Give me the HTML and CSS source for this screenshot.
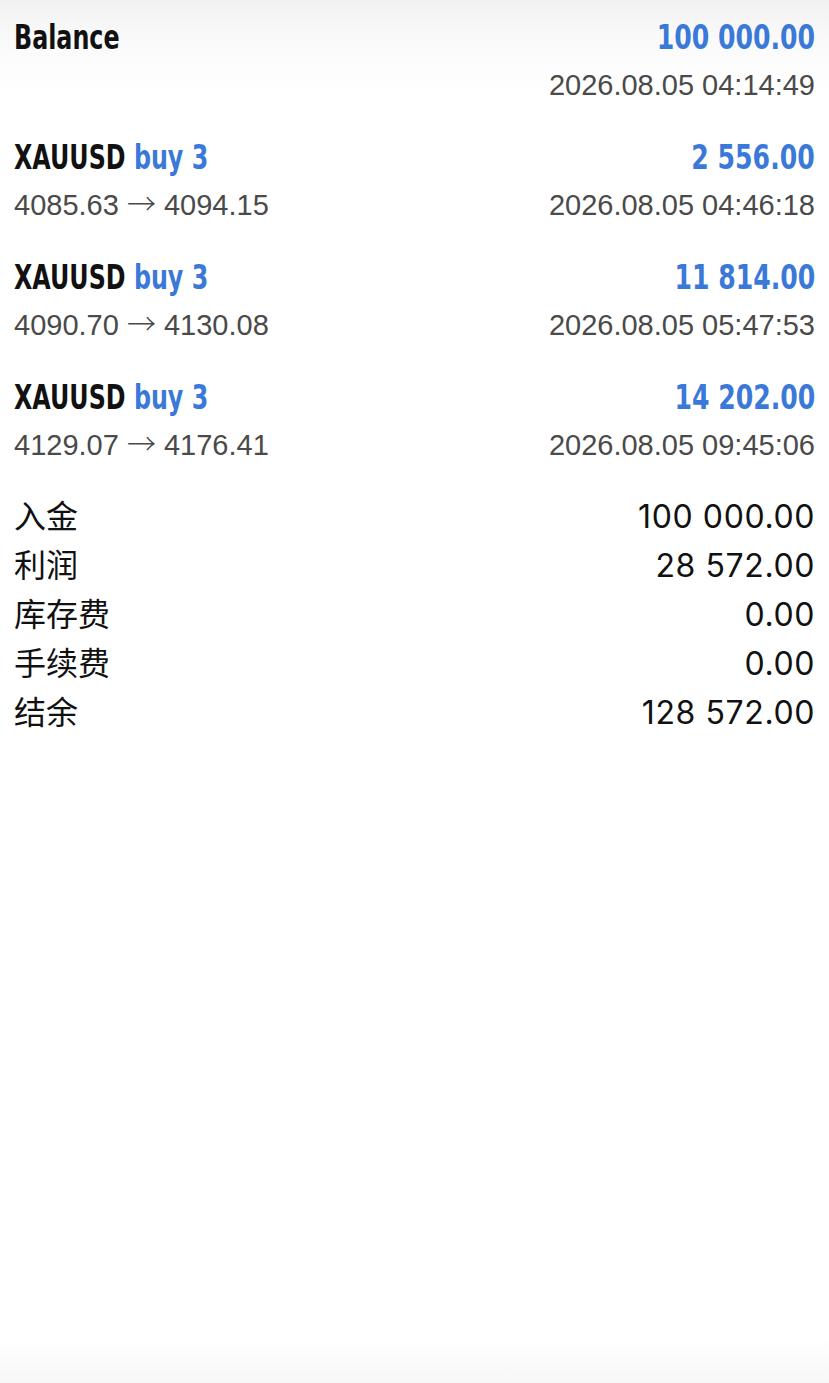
FILE: index.html
```html
<!DOCTYPE html>
<html lang="zh">
<head>
    <meta charset="UTF-8">
    <meta name="viewport" content="width=device-width, initial-scale=1.0">
    <title>History</title>
    <link rel="stylesheet" href="styles.css">
</head>
<body>
    <div class="history">
        <!-- 入金记录 -->
        <div class="deal">
            <div class="line top">
                <span class="symbol">Balance</span>
                <span class="amount">100 000.00</span>
            </div>
            <div class="line sub">
                <span></span>
                <span class="time">2026.08.05 04:14:49</span>
            </div>
        </div>
        <!-- 交易记录 -->
        <div class="deal">
            <div class="line top">
                <span class="symbol">XAUUSD <em>buy 3</em></span>
                <span class="amount">2 556.00</span>
            </div>
            <div class="line sub">
                <span class="price">4085.63 <i>→</i> 4094.15</span>
                <span class="time">2026.08.05 04:46:18</span>
            </div>
        </div>
        <div class="deal">
            <div class="line top">
                <span class="symbol">XAUUSD <em>buy 3</em></span>
                <span class="amount">11 814.00</span>
            </div>
            <div class="line sub">
                <span class="price">4090.70 <i>→</i> 4130.08</span>
                <span class="time">2026.08.05 05:47:53</span>
            </div>
        </div>
        <div class="deal">
            <div class="line top">
                <span class="symbol">XAUUSD <em>buy 3</em></span>
                <span class="amount">14 202.00</span>
            </div>
            <div class="line sub">
                <span class="price">4129.07 <i>→</i> 4176.41</span>
                <span class="time">2026.08.05 09:45:06</span>
            </div>
        </div>

        <!-- 汇总 -->
        <div class="summary">
            <div class="row"><span class="label">入金</span><span class="value">100 000.00</span></div>
            <div class="row"><span class="label">利润</span><span class="value">28 572.00</span></div>
            <div class="row"><span class="label">库存费</span><span class="value">0.00</span></div>
            <div class="row"><span class="label">手续费</span><span class="value">0.00</span></div>
            <div class="row"><span class="label">结余</span><span class="value">128 572.00</span></div>
        </div>
    </div>
</body>
</html>
```

FILE: styles.css
```css
html, body {
    margin: 0;
    padding: 0;
}
body {
    min-height: 100vh;
    background: linear-gradient(to bottom, #f1f1f1 0, #f9f9f9 35px, #ffffff 90px, #ffffff calc(100% - 45px), #f7f7f7 100%);
    color: #111;
}
.history {
    padding: 13px 14px 0 14px;
}
.deal {
    margin-bottom: 24px;
}
.line {
    display: flex;
    justify-content: space-between;
    align-items: baseline;
}
.line.top {
    height: 48px;
    line-height: 48px;
    font-family: "DejaVu Sans", sans-serif;
    font-weight: bold;
    font-size: 34px;
}
/* 没有窄体字体，只能横向压缩 */
.symbol {
    display: inline-block;
    color: #111;
    white-space: nowrap;
    transform: scaleX(0.70);
    transform-origin: left center;
}
.symbol em {
    font-style: normal;
    color: #3a79d8;
}
.amount {
    display: inline-block;
    color: #3a79d8;
    white-space: nowrap;
    transform: scaleX(0.74);
    transform-origin: right center;
}
.line.sub {
    height: 48px;
    line-height: 48px;
    font-family: "Liberation Sans", Arial, sans-serif;
    font-size: 29px;
    color: #4a4a4a;
}
.price i {
    font-style: normal;
    font-family: "Noto Sans CJK SC", sans-serif;
    font-weight: 300;
    line-height: 1;
}
/* 汇总部分 */
.summary {
    margin-top: -3px;
}
.summary .row {
    display: flex;
    justify-content: space-between;
    align-items: baseline;
    height: 49px;
    line-height: 49px;
}
.summary .label {
    font-family: "Noto Sans CJK SC", sans-serif;
    font-size: 32px;
}
.summary .value {
    font-family: Inter, "Liberation Sans", sans-serif;
    font-size: 32px;
    letter-spacing: 0.6px;
}
```
